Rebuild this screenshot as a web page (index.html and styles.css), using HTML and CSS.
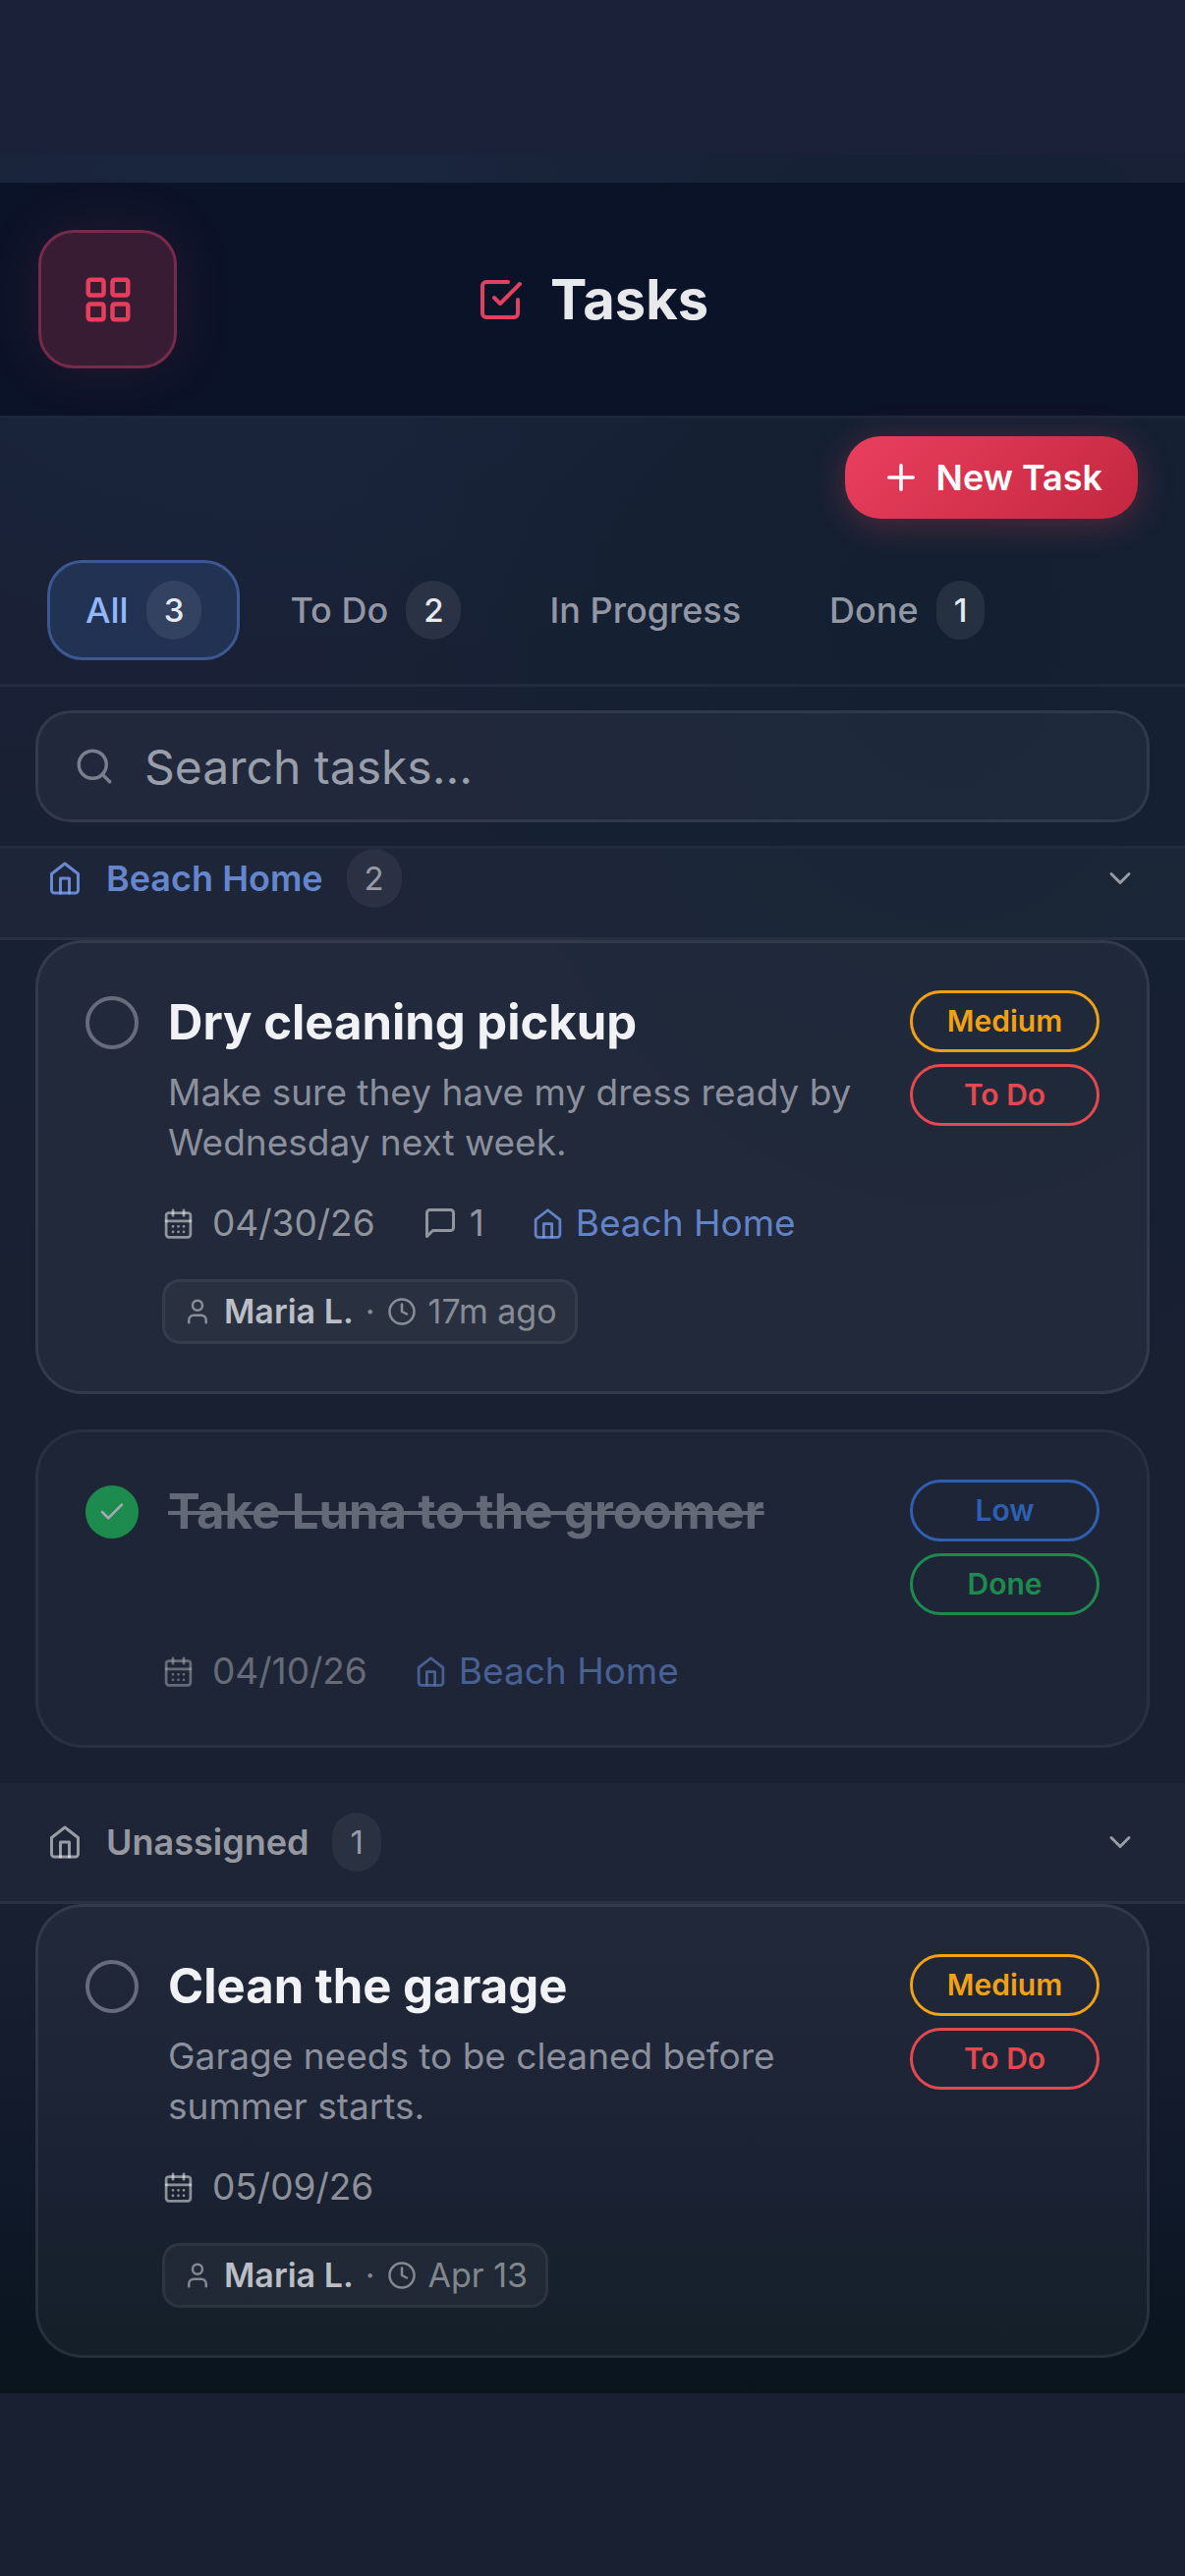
FILE: index.html
```html
<!DOCTYPE html>
<html lang="en">
<head>
  <meta charset="UTF-8">
  <meta name="viewport" content="width=device-width, initial-scale=1.0">
  <title>Tasks</title>
  <link rel="stylesheet" href="styles.css">
</head>
<body>

<!-- Shared icons -->
<svg class="sprite" aria-hidden="true">
  <symbol id="i-grid" viewBox="0 0 24 24">
    <rect x="3" y="3" width="7" height="7" rx="1"/><rect x="14" y="3" width="7" height="7" rx="1"/>
    <rect x="14" y="14" width="7" height="7" rx="1"/><rect x="3" y="14" width="7" height="7" rx="1"/>
  </symbol>
  <symbol id="i-check-square" viewBox="0 0 24 24">
    <path d="M9 11l3 3L22 4"/><path d="M21 12v7a2 2 0 0 1-2 2H5a2 2 0 0 1-2-2V5a2 2 0 0 1 2-2h11"/>
  </symbol>
  <symbol id="i-plus" viewBox="0 0 24 24"><path d="M12 5v14M5 12h14"/></symbol>
  <symbol id="i-search" viewBox="0 0 24 24"><circle cx="11" cy="11" r="8"/><path d="M21 21l-4.35-4.35"/></symbol>
  <symbol id="i-home" viewBox="0 0 24 24">
    <path d="M3 9l9-7 9 7v11a2 2 0 0 1-2 2H5a2 2 0 0 1-2-2z"/><path d="M9 22V12h6v10"/>
  </symbol>
  <symbol id="i-chevron" viewBox="0 0 24 24"><path d="M6 9l6 6 6-6"/></symbol>
  <symbol id="i-check" viewBox="0 0 24 24"><path d="M20 6L9 17l-5-5"/></symbol>
  <symbol id="i-calendar" viewBox="0 0 24 24">
    <path d="M8 2v4"/><path d="M16 2v4"/><rect x="3" y="4" width="18" height="18" rx="2"/><path d="M3 10h18"/>
    <path d="M8 14h.01M12 14h.01M16 14h.01M8 18h.01M12 18h.01M16 18h.01"/>
  </symbol>
  <symbol id="i-comment" viewBox="0 0 24 24"><path d="M21 15a2 2 0 0 1-2 2H7l-4 4V5a2 2 0 0 1 2-2h14a2 2 0 0 1 2 2z"/></symbol>
  <symbol id="i-user" viewBox="0 0 24 24"><path d="M19 21v-2a4 4 0 0 0-4-4H9a4 4 0 0 0-4 4v2"/><circle cx="12" cy="7" r="4"/></symbol>
  <symbol id="i-clock" viewBox="0 0 24 24"><circle cx="12" cy="12" r="10"/><path d="M12 6v6l4 2"/></symbol>
</svg>

<div class="app">
  <header class="topbar">
    <button class="menu-btn" type="button" aria-label="Menu"><svg class="icon icon-54"><use href="#i-grid"/></svg></button>
    <h1 class="page-title"><svg class="icon icon-48"><use href="#i-check-square"/></svg>Tasks</h1>
  </header>

  <div class="toolbar">
    <button class="new-task" type="button"><svg class="icon icon-42"><use href="#i-plus"/></svg>New Task</button>
  </div>

  <nav class="tabs">
    <button class="tab active" type="button">All <span class="count">3</span></button>
    <button class="tab" type="button">To Do <span class="count">2</span></button>
    <button class="tab" type="button">In Progress</button>
    <button class="tab" type="button">Done <span class="count">1</span></button>
  </nav>

  <div class="search">
    <label class="search-box">
      <svg class="icon icon-42"><use href="#i-search"/></svg>
      <input type="text" placeholder="Search tasks..." aria-label="Search tasks">
    </label>
  </div>

  <main>
    <section>
      <button class="group-header stuck property" type="button">
        <svg class="icon icon-36"><use href="#i-home"/></svg>
        <span class="group-name">Beach Home</span>
        <span class="count">2</span>
        <svg class="icon icon-36 chevron"><use href="#i-chevron"/></svg>
      </button>

      <div class="cards">
        <article class="card">
          <div class="card-top">
            <label class="check">
              <input type="checkbox" aria-label="Dry cleaning pickup">
            </label>
            <div class="card-text">
              <h2>Dry cleaning pickup</h2>
              <p>Make sure they have my dress ready by Wednesday next week.</p>
            </div>
            <div class="pills">
              <span class="pill medium">Medium</span>
              <span class="pill todo">To Do</span>
            </div>
          </div>
          <div class="meta">
            <span class="date"><svg class="icon icon-33"><use href="#i-calendar"/></svg>04/30/26</span>
            <span><svg class="icon icon-36"><use href="#i-comment"/></svg>1</span>
            <span class="home"><svg class="icon icon-33"><use href="#i-home"/></svg>Beach Home</span>
          </div>
          <div class="author">
            <svg class="icon icon-30"><use href="#i-user"/></svg>
            <strong>Maria L.</strong>
            <span>·</span>
            <svg class="icon icon-30"><use href="#i-clock"/></svg>
            <span>17m ago</span>
          </div>
        </article>

        <article class="card done">
          <div class="card-top">
            <label class="check">
              <input type="checkbox" aria-label="Take Luna to the groomer" checked>
              <svg class="icon icon-30"><use href="#i-check"/></svg>
            </label>
            <div class="card-text">
              <h2>Take Luna to the groomer</h2>
            </div>
            <div class="pills">
              <span class="pill low">Low</span>
              <span class="pill finished">Done</span>
            </div>
          </div>
          <div class="meta">
            <span class="date"><svg class="icon icon-33"><use href="#i-calendar"/></svg>04/10/26</span>
            <span class="home"><svg class="icon icon-33"><use href="#i-home"/></svg>Beach Home</span>
          </div>
        </article>
      </div>
    </section>

    <section>
      <button class="group-header" type="button">
        <svg class="icon icon-36"><use href="#i-home"/></svg>
        <span class="group-name">Unassigned</span>
        <span class="count">1</span>
        <svg class="icon icon-36 chevron"><use href="#i-chevron"/></svg>
      </button>

      <div class="cards">
        <article class="card">
          <div class="card-top">
            <label class="check">
              <input type="checkbox" aria-label="Clean the garage">
            </label>
            <div class="card-text">
              <h2>Clean the garage</h2>
              <p>Garage needs to be cleaned before summer starts.</p>
            </div>
            <div class="pills">
              <span class="pill medium">Medium</span>
              <span class="pill todo">To Do</span>
            </div>
          </div>
          <div class="meta">
            <span class="date"><svg class="icon icon-33"><use href="#i-calendar"/></svg>05/09/26</span>
          </div>
          <div class="author">
            <svg class="icon icon-30"><use href="#i-user"/></svg>
            <strong>Maria L.</strong>
            <span>·</span>
            <svg class="icon icon-30"><use href="#i-clock"/></svg>
            <span>Apr 13</span>
          </div>
        </article>
      </div>
    </section>
  </main>
</div>

</body>
</html>
```
FILE: styles.css
```css
* { box-sizing: border-box; }
body { margin: 0; background: #182031; color: #f1f2f5; font-family: Inter, "Liberation Sans", sans-serif; font-size: 36px; }
button, input { font: inherit; color: inherit; }
button { cursor: pointer; }
h1, h2, p { margin: 0; }

.sprite { display: none; }
.icon { flex: none; fill: none; stroke: currentColor; stroke-width: 2; stroke-linecap: round; stroke-linejoin: round; }
.icon-30 { width: 30px; height: 30px; }
.icon-33 { width: 33px; height: 33px; }
.icon-36 { width: 36px; height: 36px; }
.icon-42 { width: 42px; height: 42px; }
.icon-48 { width: 48px; height: 48px; }
.icon-54 { width: 54px; height: 54px; }

.app {
  padding-top: 186px;
  background:
    linear-gradient(#1a2138, #1a2138) top / 100% 157px no-repeat,
    linear-gradient(to top, #09141d, rgba(13, 22, 38, 0.75) 200px, rgba(16, 24, 44, 0) 500px),
    radial-gradient(ellipse 640px 800px at 80% 640px, #132031, rgba(19, 32, 49, 0)),
    radial-gradient(ellipse 620px 500px at 23% 200px, #19273e, rgba(25, 39, 62, 0)),
    linear-gradient(#1a2139, #182032 1300px);
}

/* Header */
.topbar { display: grid; grid-template-columns: 1fr auto 1fr; align-items: center; padding: 48px 39px; background: #0b1329; border-bottom: 3px solid #1c263a; }
.menu-btn { display: grid; place-items: center; width: 141px; height: 141px; padding: 0; border: 3px solid #762b4a; border-radius: 36px; background: #381c34; color: #e83e5e; box-shadow: 0 0 60px rgba(232, 62, 94, 0.12); }
.page-title { display: flex; align-items: center; gap: 27px; font-size: 56px; font-weight: 700; line-height: 72px; color: #e7e9ea; }
.page-title .icon { color: #e2405f; }

.toolbar { display: flex; justify-content: flex-end; padding: 18px 48px; }
.new-task { display: flex; align-items: center; gap: 15px; height: 84px; padding: 0 36px; border: 0; border-radius: 36px; background: linear-gradient(135deg, #e93f5e, #c4273f); color: #fff; font-weight: 600; box-shadow: 0 6px 36px rgba(232, 62, 94, 0.3); }

/* Filters */
.tabs { display: flex; gap: 12px; padding: 24px 48px; border-bottom: 3px solid rgba(255, 255, 255, 0.05); }
.tab { display: flex; align-items: center; gap: 18px; height: 102px; padding: 0 36px; border: 3px solid transparent; border-radius: 36px; background: none; color: #9297a3; font-weight: 500; }
.tab.active { border-color: #3c5892; background: #223253; color: #94b7fb; }
.count { padding: 9px 18px; border-radius: 30px; background: rgba(255, 255, 255, 0.08); color: #e6e9ee; font-size: 33px; line-height: 42px; }

.search { padding: 24px 36px; border-bottom: 3px solid rgba(255, 255, 255, 0.05); }
.search-box { display: flex; align-items: center; gap: 30px; height: 114px; padding: 0 36px; border: 3px solid rgba(255, 255, 255, 0.08); border-radius: 36px; background: rgba(255, 255, 255, 0.04); color: #797f8c; }
.search-box input { flex: 1; min-width: 0; padding: 0; border: 0; outline: 0; background: none; font-size: 48px; }
.search-box input::placeholder { color: #989eaa; opacity: 1; }

/* Groups */
.group-header { display: flex; align-items: center; gap: 24px; width: 100%; padding: 30px 48px; border: 0; border-bottom: 3px solid rgba(255, 255, 255, 0.06); background: rgba(255, 255, 255, 0.025); color: rgba(255, 255, 255, 0.55); text-align: left; }
.group-header.stuck { padding-top: 0; }
.group-header .count { background: rgba(255, 255, 255, 0.06); color: #969ba7; font-weight: 400; }
.group-name { font-weight: 600; }
.property > .icon:first-child, .property .group-name { color: rgba(122, 162, 247, 0.8); }
.chevron { margin-left: auto; }

/* Task cards */
.cards { display: flex; flex-direction: column; gap: 36px; padding: 0 36px 36px; }
.card { padding: 48px; border: 3px solid rgba(255, 255, 255, 0.08); border-radius: 48px; background: rgba(255, 255, 255, 0.045); }
.card.done { opacity: 0.65; }
.card-top { display: flex; align-items: flex-start; gap: 30px; }
.check { display: grid; place-items: center; margin-top: 6px; }
.check > * { grid-area: 1 / 1; }
.check input { appearance: none; width: 54px; height: 54px; margin: 0; border: 4px solid #666c7b; border-radius: 50%; }
.check input:checked { border-color: #22c55e; background: #22c55e; }
.card-text { flex: 1; }
.card-text h2 { font-size: 49px; font-weight: 700; line-height: 66px; }
.card-text p { margin-top: 12px; font-size: 37px; line-height: 51px; color: #8b909c; }
.done h2 { color: #8d919c; text-decoration: line-through; }

.pills { display: flex; flex-direction: column; gap: 12px; width: 193px; }
.pill { height: 63px; border: 3px solid; border-radius: 32px; font-size: 30px; font-weight: 600; line-height: 57px; text-align: center; }
.medium { color: #f2a014; }
.todo { color: #e5484d; }
.low { color: #3b82f6; }
.finished { color: #22c55e; }

.meta { display: flex; gap: 48px; margin: 30px 0 0 78px; font-size: 37px; line-height: 54px; color: rgba(255, 255, 255, 0.5); }
.meta span { display: flex; align-items: center; gap: 12px; }
.meta .date { gap: 18px; }
.meta .home { color: rgba(122, 162, 247, 0.75); }

.author { display: flex; align-items: center; gap: 12px; width: fit-content; margin: 30px 0 0 78px; padding: 9px 18px; border: 3px solid rgba(255, 255, 255, 0.06); border-radius: 18px; background: rgba(255, 255, 255, 0.04); font-size: 34px; line-height: 42px; color: rgba(255, 255, 255, 0.45); }
.author strong { font-weight: 600; color: #bbbec5; }
```
